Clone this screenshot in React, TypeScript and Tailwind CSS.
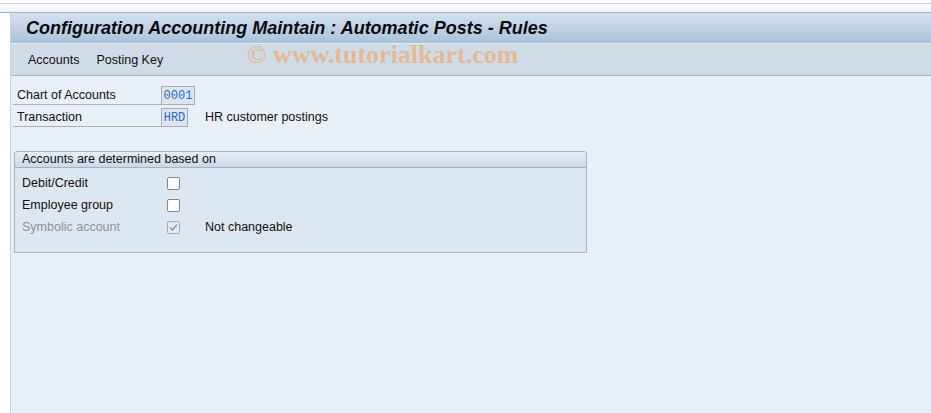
import React from "react";

function Checkbox({ checked, disabled }: { checked?: boolean; disabled?: boolean }) {
  return (
    <div
      className={
        "w-[13px] h-[13px] rounded-[2px] border flex items-center justify-center " +
        (disabled ? "border-[#a3abb3] bg-[#e3eaf1]" : "border-[#7d8891] bg-white")
      }
    >
      {checked && (
        <svg width="9" height="9" viewBox="0 0 9 9">
          <path d="M1.2 4.6 L3.5 7 L7.8 1.6" fill="none" stroke="#8a949d" strokeWidth="1.4" />
        </svg>
      )}
    </div>
  );
}

function FieldRow({ label, value, width, text }: { label: string; value: string; width: string; text?: string }) {
  return (
    <div className="flex items-center h-[19px]">
      <div className="w-[148px] h-[19px] border-b border-[#a9b1ba] pl-[4px] flex items-center text-[12.5px] text-[#111]">
        {label}
      </div>
      <div
        className={
          width +
          " h-[19px] border border-[#a5adb5] bg-[#dde6f0] flex items-center justify-center font-['Liberation_Mono'] text-[12px] text-[#2a6cc0]"
        }
      >
        {value}
      </div>
      {text && <div className="ml-[17px] text-[12.5px] text-[#111]">{text}</div>}
    </div>
  );
}

function GroupRow({ label, checked, disabled, note }: { label: string; checked?: boolean; disabled?: boolean; note?: string }) {
  return (
    <div className="flex items-center h-[22px]">
      <div className={"w-[152px] pl-[7px] text-[12.5px] " + (disabled ? "text-[#8b939b]" : "text-[#111]")}>{label}</div>
      <Checkbox checked={checked} disabled={disabled} />
      {note && <div className="ml-[25px] text-[12.5px] text-[#111]">{note}</div>}
    </div>
  );
}

export default function App() {
  return (
    <div className="relative w-[931px] h-[413px] bg-white overflow-hidden font-['Liberation_Sans',sans-serif]">
      {/* top strip */}
      <div className="h-[3px] bg-white" />
      <div className="h-[1px] bg-[#d2d4d7]" />
      <div className="h-[8px] bg-gradient-to-b from-[#fbfcfd] to-[#eef2f7]" />
      <div className="h-[1px] bg-[#a5b4c4]" />

      <div className="ml-[10px] h-[400px] border-l border-[#c8d3df] flex flex-col">
        {/* title bar */}
        <div className="h-[30px] bg-gradient-to-b from-[#d3e1ef] to-[#abc2db] flex items-center pl-[15px]">
          <span className="text-[18px] font-bold italic text-[#0b0b0b]">
            Configuration Accounting Maintain : Automatic Posts - Rules
          </span>
        </div>
        <div className="h-[1px] bg-[#e4ecf4]" />

        {/* menu bar */}
        <div className="h-[32px] bg-[#cfdce7] border-b border-[#a2b2c2] flex items-center pl-[17px] pt-[1px] gap-[17px] text-[12.5px] text-[#111]">
          <span>Accounts</span>
          <span>Posting Key</span>
        </div>

        {/* content */}
        <div className="flex-1 bg-[#e8eff7] pt-[10px] pl-[2px]">
          <div className="flex flex-col gap-[3px]">
            <FieldRow label="Chart of Accounts" value="0001" width="w-[34px]" />
            <FieldRow label="Transaction" value="HRD" width="w-[27px]" text="HR customer postings" />
          </div>

          <div className="mt-[24px] ml-[1px] w-[573px] h-[102px] border border-[#9fb3c8] rounded-t-[3px] bg-[#dde7f1]">
            <div className="h-[16px] bg-gradient-to-b from-[#e6eef6] to-[#c9d8e8] border-b border-[#9fb3c8] rounded-t-[3px] pl-[7px] flex items-center text-[12.5px] text-[#111]">
              Accounts are determined based on
            </div>
            <div className="pt-[4px]">
              <GroupRow label="Debit/Credit" />
              <GroupRow label="Employee group" />
              <GroupRow label="Symbolic account" checked disabled note="Not changeable" />
            </div>
          </div>
        </div>
      </div>

      {/* watermark */}
      <div className="absolute left-[247px] top-[35px] font-['Liberation_Serif',serif] font-bold text-[26px] text-[#f0a868] opacity-65 pointer-events-none">
        © www.tutorialkart.com
      </div>
    </div>
  );
}
